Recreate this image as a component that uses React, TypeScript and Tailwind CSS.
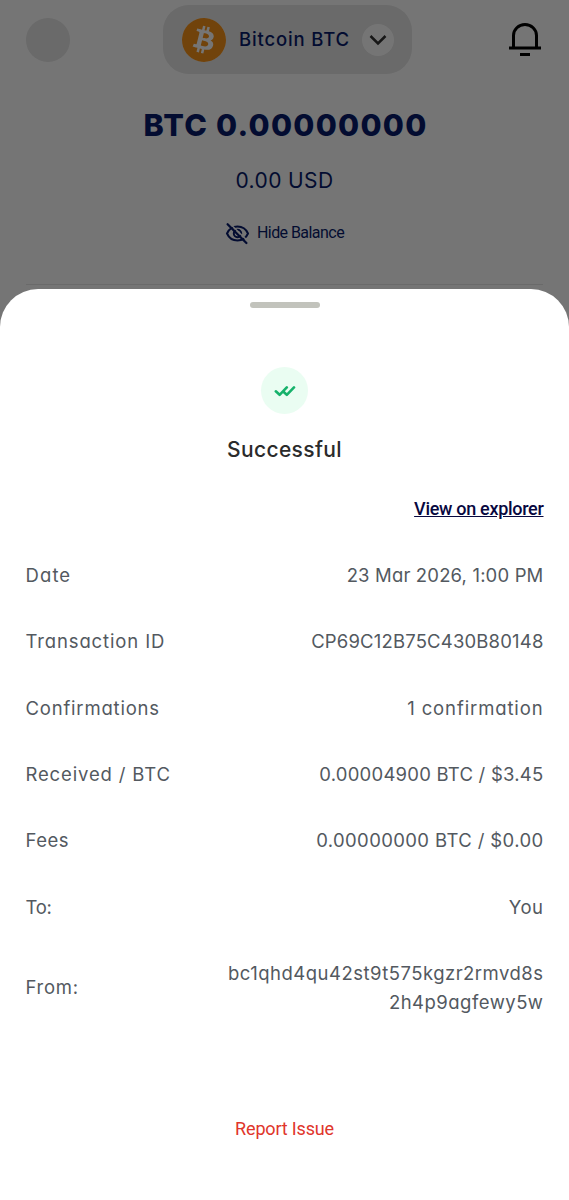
import { SiBitcoin } from "react-icons/si";

const HEADING = "font-['Inter',sans-serif] [font-feature-settings:'cv11']";
const BODY = "font-['Roboto',sans-serif]";

const details = [
  { label: "Date", value: "23 Mar 2026, 1:00 PM", labelClass: "tracking-[1.1px]", valueClass: "tracking-[0.16px]" },
  { label: "Transaction ID", value: "CP69C12B75C430B80148", labelClass: "tracking-[0.87px]", valueClass: "tracking-[0.17px]" },
  { label: "Confirmations", value: "1 confirmation", labelClass: "tracking-[0.8px]", valueClass: "tracking-[0.88px]" },
  { label: "Received / BTC", value: "0.00004900 BTC / $3.45", labelClass: "tracking-[0.85px]", valueClass: "tracking-[0.23px]" },
  { label: "Fees", value: "0.00000000 BTC / $0.00", labelClass: "tracking-[0.5px]", valueClass: "tracking-[0.38px]" },
  { label: "To:", value: "You", labelClass: "tracking-[-0.3px]", valueClass: "tracking-[0.5px]" },
];

const BellIcon = () => (
  <svg width="32" height="34" viewBox="0 0 32 34" fill="none" stroke="black" strokeWidth="3">
    <path d="M4.5 25V12.5a11.5 11 0 0 1 23 0V25" />
    <path d="M0 25h32M11 31.5h10" />
  </svg>
);

const HiddenEye = () => (
  <svg width="25" height="25" viewBox="0 0 25 25" fill="none" stroke="currentColor" strokeWidth="2">
    <path d="M2 12.5C4 8 8 5.5 12.5 5.5S21 8 23 12.5C21 17 17 19.5 12.5 19.5S4 17 2 12.5Z" />
    <circle cx="12.5" cy="12.5" r="3.7" />
    {/* gap beside the slash */}
    <path d="M4.5 2.2 23 20.2" stroke="white" strokeWidth="1.6" />
    <path d="M2.6 3.2 21.4 22" strokeWidth="2.3" strokeLinecap="round" />
  </svg>
);

const DoubleCheck = () => (
  <svg
    width="22"
    height="12"
    viewBox="0 0 22 12"
    fill="none"
    stroke="#16b26b"
    strokeWidth="2.6"
    strokeLinecap="round"
    strokeLinejoin="round"
  >
    <path d="M1.8 6.3 5.6 9.8 12.8 2.4M10 7.2 12.8 9.8 20 2.4" />
  </svg>
);

const Wallet = () => (
  <div className="flex h-full flex-col items-center bg-white text-[#081c6b]">
    <header className="flex w-full items-center pt-[5px] pl-[26px]">
      <div className="size-11 rounded-full bg-[#e6e6e6]" />
      <div className="ml-[93px] flex h-[69px] w-[249px] items-center rounded-[26px] bg-[#e6e6e6] pl-[19px]">
        <div className="size-11 rounded-full bg-white">
          <SiBitcoin size={44} className="text-[#f7931a]" />
        </div>
        <span className={`${HEADING} ml-[13px] w-[111px] text-[18.5px] font-medium tracking-[0.85px] whitespace-nowrap`}>
          Bitcoin BTC
        </span>
        <div className="ml-[12px] flex size-8 items-center justify-center rounded-full bg-white">
          <svg width="18" height="12" viewBox="0 0 18 12" fill="none" stroke="#333" strokeWidth="2.5">
            <path d="M1.5 2 9 9.5 16.5 2" />
          </svg>
        </div>
      </div>
      <div className="ml-[97px] shrink-0">
        <BellIcon />
      </div>
    </header>
    <h1 className={`${HEADING} mt-[31px] pl-[2px] text-[30.5px] leading-10 font-extrabold tracking-[1.27px] whitespace-nowrap`}>
      BTC 0.00000000
    </h1>
    <p className={`${HEADING} mt-[20px] text-[21px] tracking-[0.4px] whitespace-nowrap`}>0.00 USD</p>
    <div className={`${BODY} mt-[24px] flex items-center gap-[7px] text-[16px] tracking-[-0.55px]`}>
      <HiddenEye />
      Hide Balance
    </div>
    <hr className="mt-[38px] w-[517px] border-[#e8e8e8]" />
  </div>
);

const App = () => {
  return (
    <div className="relative h-[1200px] w-[569px] overflow-hidden bg-white">
      <Wallet />

      {/* Dimmed backdrop with the bottom sheet */}
      <div className="absolute inset-0 flex flex-col bg-black/54 pt-[289px]">
        <section className="flex flex-1 flex-col items-center rounded-t-[38px] bg-white px-[25.5px]">
          <div className="mt-[13px] h-[6px] w-[70px] rounded-full bg-[#c2c3bc]" />
          <div className="mt-[59px] flex size-[47px] items-center justify-center rounded-full bg-[#eafdf2]">
            <DoubleCheck />
          </div>
          <h2
            className={`${HEADING} mt-[21px] text-[21px] leading-[30px] font-medium tracking-[0.35px] text-[#2b2b2b]`}
          >
            Successful
          </h2>
          <a
            className={`${BODY} mt-[33px] self-end text-[18px] leading-[22px] font-medium tracking-[-0.3px] text-[#08083f] underline`}
          >
            View on explorer
          </a>

          <dl className={`${HEADING} mt-[22.6px] w-full text-[18.5px] text-[#53595f]`}>
            {details.map((d) => (
              <div key={d.label} className="flex h-[66.4px] items-center justify-between">
                <dt className={d.labelClass}>{d.label}</dt>
                <dd className={d.valueClass}>{d.value}</dd>
              </div>
            ))}
            <div className="flex h-[94px] items-center justify-between">
              <dt className="tracking-[0.7px]">From:</dt>
              <dd className="text-right leading-[28.5px] tracking-[0.48px]">
                bc1qhd4qu42st9t575kgzr2rmvd8s
                <br />
                2h4p9agfewy5w
              </dd>
            </div>
          </dl>

          <button className={`${BODY} mt-[80px] text-[18px] tracking-[-0.17px] text-[#e0352b]`}>Report Issue</button>
        </section>
      </div>
    </div>
  );
};

export default App;
